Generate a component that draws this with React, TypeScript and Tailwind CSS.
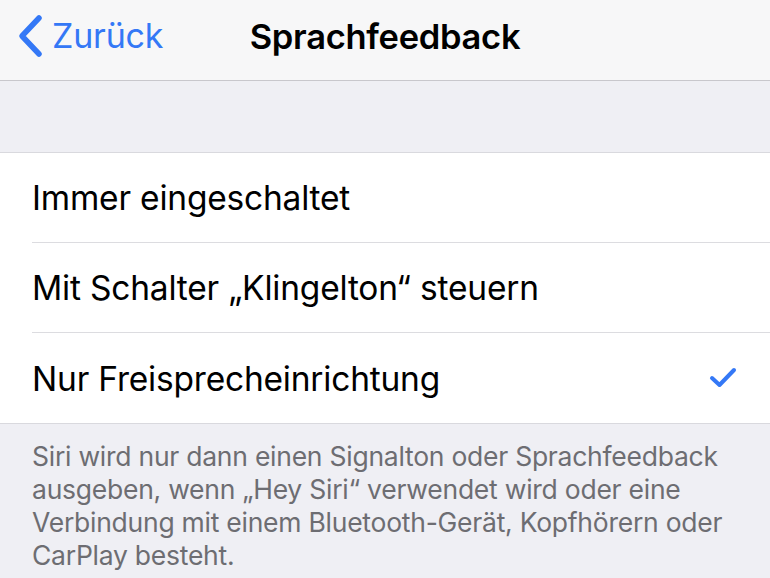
const options = [
  { label: 'Immer eingeschaltet', selected: false },
  { label: 'Mit Schalter „Klingelton“ steuern', selected: false },
  { label: 'Nur Freisprecheinrichtung', selected: true },
]

function Chevron() {
  return (
    <svg width="28" height="44" viewBox="0 0 28 44" fill="none">
      <path d="M23 4 L6 22 L23 40" stroke="#3478f6" strokeWidth="5.5" strokeLinecap="round" strokeLinejoin="round" />
    </svg>
  )
}

function Check() {
  return (
    <svg width="28" height="22" viewBox="0 0 28 22" fill="none">
      <path d="M3 11 L10.5 18 L25 3" stroke="#3478f6" strokeWidth="4" strokeLinecap="round" strokeLinejoin="round" />
    </svg>
  )
}

export default function App() {
  return (
    <div className="w-[770px] h-[578px] overflow-hidden bg-[#efeff4] font-['Inter','Liberation_Sans',sans-serif]">
      {/* Navigationsleiste */}
      <div className="relative h-[81px] bg-[#f7f7f8] border-b border-[#c8c7cc] flex items-center justify-center">
        <div className="absolute left-[16px] top-0 h-full flex items-center gap-[8px] text-[#3478f6] text-[34px] tracking-[-0.2px] mt-[-4px]">
          <Chevron />
          <span className="mt-[-2px]">Zurück</span>
        </div>
        <h1 className="text-[34.5px] font-semibold text-black tracking-[-0.3px] mt-[-6px]">Sprachfeedback</h1>
      </div>

      <div className="h-[71px]" />

      {/* Optionen */}
      <div className="bg-white border-y border-[#d9d9de]">
        {options.map((o, i) => (
          <div key={o.label} className="pl-[32px]">
            <div
              className={`h-[90px] flex items-center justify-between pr-[33px] ${
                i < options.length - 1 ? 'border-b border-[#dcdce0]' : ''
              }`}
            >
              <span className="text-[33.5px] text-black tracking-[-0.2px] mt-[2px]">{o.label}</span>
              {o.selected && <Check />}
            </div>
          </div>
        ))}
      </div>

      {/* Hinweistext */}
      <p className="px-[32px] pt-[16px] text-[26.5px] leading-[33px] text-[#6d6d72] tracking-[-0.25px]">
        Siri wird nur dann einen Signalton oder Sprachfeedback ausgeben, wenn „Hey Siri“ verwendet wird oder eine
        Verbindung mit einem Bluetooth-Gerät, Kopfhörern oder CarPlay besteht.
      </p>
    </div>
  )
}
